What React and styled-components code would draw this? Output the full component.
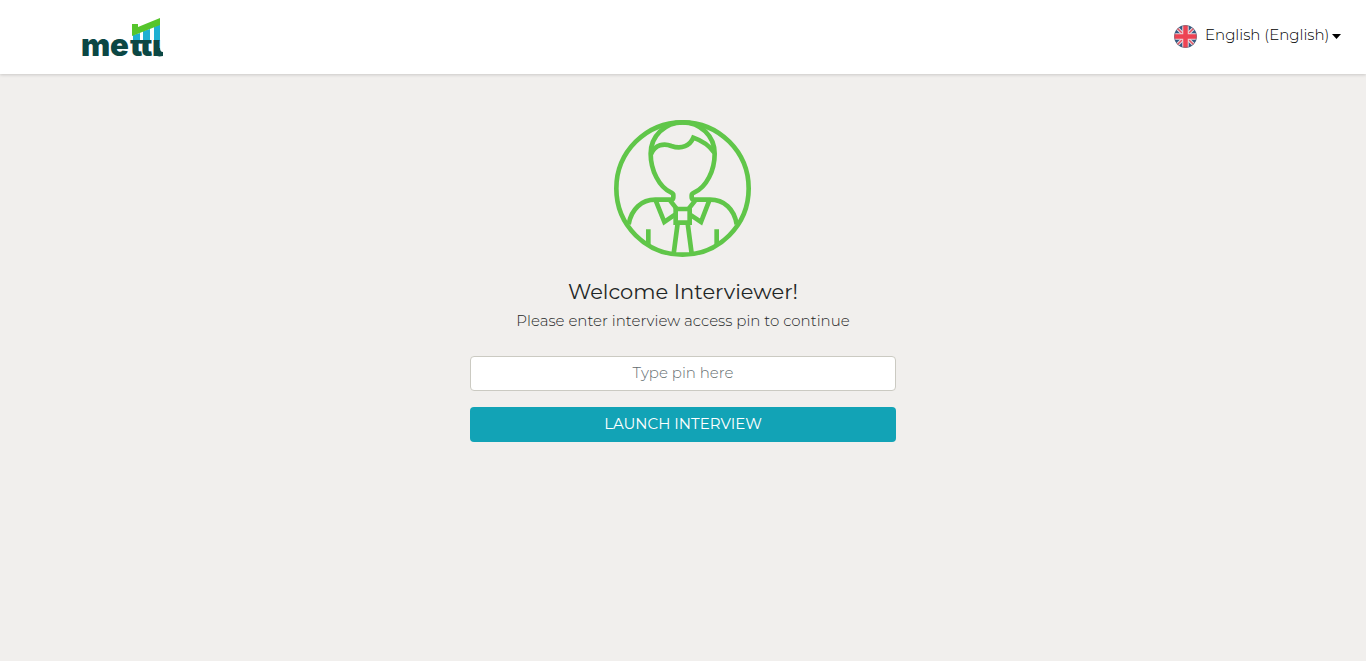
import React from "react";
import styled, { createGlobalStyle } from "styled-components";

const GlobalStyle = createGlobalStyle`
  *, *::before, *::after { box-sizing: border-box; }
  body {
    margin: 0;
    background: #f1efed;
    color: #1f2727;
    font-family: Montserrat, Inter, "Liberation Sans", sans-serif;
    font-size: 15px;
    font-weight: 300;
    line-height: 20px;
  }
`;

const Header = styled.header`
  display: flex;
  align-items: center;
  justify-content: space-between;
  height: 74px;
  padding: 0 25px 0 80px;
  background: #fff;
  box-shadow: 0 1px 3px rgba(0, 0, 0, 0.16);
`;

const LogoLink = styled.a`
  display: block;
  height: 54px;
`;

const LanguagePicker = styled.label`
  display: flex;
  align-items: center;
  padding-bottom: 2px;
  color: #000;
`;

const LanguageSelect = styled.select`
  appearance: none;
  margin: 0 2px 2px 8px;
  padding: 0;
  border: 0;
  background: transparent;
  color: inherit;
  font: inherit;
  cursor: pointer;
`;

const Main = styled.main`
  display: flex;
  flex-direction: column;
  align-items: center;
  width: 100%;
  max-width: 426px;
  margin: 0 auto;
  padding-top: 46px;
`;

const Title = styled.h1`
  margin: 20px 0 4px;
  font-size: 21px;
  font-weight: 400;
  line-height: 30px;
`;

const Subtitle = styled.p`
  margin: 0;
`;

const PinForm = styled.form`
  display: grid;
  gap: 16px;
  width: 100%;
  margin-top: 25px;
`;

const PinInput = styled.input`
  width: 100%;
  height: 35px;
  padding: 0 12px 2px;
  border: 1px solid #cbcac2;
  border-radius: 4px;
  background: #fff;
  color: #1f2727;
  font: inherit;
  text-align: center;
  &::placeholder { color: #636c6f; opacity: 1; }
`;

const LaunchButton = styled.button`
  height: 35px;
  padding: 0 12px 2px;
  border: 0;
  border-radius: 4px;
  background: #12a3b6;
  color: #fff;
  font: inherit;
  font-weight: 400;
  text-transform: uppercase;
  cursor: pointer;
`;

function Logo() {
  return (
    <svg width="96" height="54" viewBox="80 10 96 54" role="img" aria-label="mettl">
      <defs>
        <linearGradient id="ink" gradientUnits="userSpaceOnUse" x1="0" y1="0" x2="0" y2="80">
          <stop offset="0.5" stopColor="#1fb0d2" />
          <stop offset="0.5" stopColor="#0b4744" />
        </linearGradient>
      </defs>
      <path fill="#1fb0d2" d="M133 35l7-2v8h-7zM143 31l7-2v12h-7zM154 27l6-3v17h-6z" />
      <g fontFamily="Inter, sans-serif" fontSize="31" fontWeight="900">
        <text x="81 110" y="56" fill="#0b4744">me</text>
        <text x="130 140 152" y="56" fill="url(#ink)">ttl</text>
      </g>
      <path fill="#fff" d="M128 33h5v7h-5zM140 30h3v10h-3zM150 28h4v12h-4zM160 24h4v16h-4z" />
      <path fill="#55c52b" d="M132 24h6v3l22-9v7l-28 11z" />
      <path fill="#0b4744" d="M154 48h6q0 4 3 4v4q-9 2-9-5z" />
    </svg>
  );
}

function Flag() {
  return (
    <svg width="23" height="23" viewBox="0 0 46 46" aria-hidden="true">
      <defs><clipPath id="disc"><circle cx="23" cy="23" r="22.5" /></clipPath></defs>
      <g clipPath="url(#disc)">
        <path fill="#315a87" d="M0 0h46v46H0z" />
        <path stroke="#e6dfe4" strokeWidth="7" d="M3 3l40 40M43 3L3 43" />
        <path stroke="#e55463" strokeWidth="3" d="M3 3l40 40M43 3L3 43" />
        <path stroke="#f0d3d8" strokeWidth="13" d="M23 0v46M0 23h46" />
        <path stroke="#ed4353" strokeWidth="9" d="M23 0v46M0 23h46" />
      </g>
      <circle cx="23" cy="23" r="22" fill="none" stroke="#54616f" strokeOpacity=".45" strokeWidth="2" />
    </svg>
  );
}

function InterviewerIcon() {
  return (
    <svg width="138" height="137" viewBox="18 15 414 411" fill="none" stroke="#60c649" strokeWidth="14" aria-hidden="true">
      <circle cx="223.5" cy="220.5" r="198.5" />
      <path d="M62 328C70 282 101 254 142 254H190Q196 254 196 247V240Q196 236 190 233C153 217 128 165 128 116C128 63 171 22 224 22S320 63 320 116C320 165 296 217 258 233Q251 236 251 241V247Q251 254 258 254H306C348 254 379 282 386 328" />
      <path d="M129 117C141 88 169 84 190 93C222 104 246 92 256 68C282 77 304 92 319 113" />
      <path d="M143 256L169 321L201 299M186 256L208 284M304 256L279 321L246 299M262 256L240 284" />
      <path d="M203 282h42v41h-42zM209 325L197 416M239 325L251 416M121 343v47M326 343v47" />
    </svg>
  );
}

export default function App() {
  return (
    <>
      <GlobalStyle />
      <Header>
        <LogoLink href="#"><Logo /></LogoLink>
        <LanguagePicker>
          <Flag />
          <LanguageSelect aria-label="Language" defaultValue="en">
            <option value="en">English (English)</option>
          </LanguageSelect>
          <svg width="9" height="5" viewBox="0 0 9 5" aria-hidden="true"><path d="M0 0h9L4.500 5z" /></svg>
        </LanguagePicker>
      </Header>
      <Main>
        <InterviewerIcon />
        <Title>Welcome Interviewer!</Title>
        <Subtitle>Please enter interview access pin to continue</Subtitle>
        <PinForm onSubmit={(event) => event.preventDefault()}>
          <PinInput type="text" placeholder="Type pin here" aria-label="Interview access pin" />
          <LaunchButton type="submit">Launch Interview</LaunchButton>
        </PinForm>
      </Main>
    </>
  );
}
